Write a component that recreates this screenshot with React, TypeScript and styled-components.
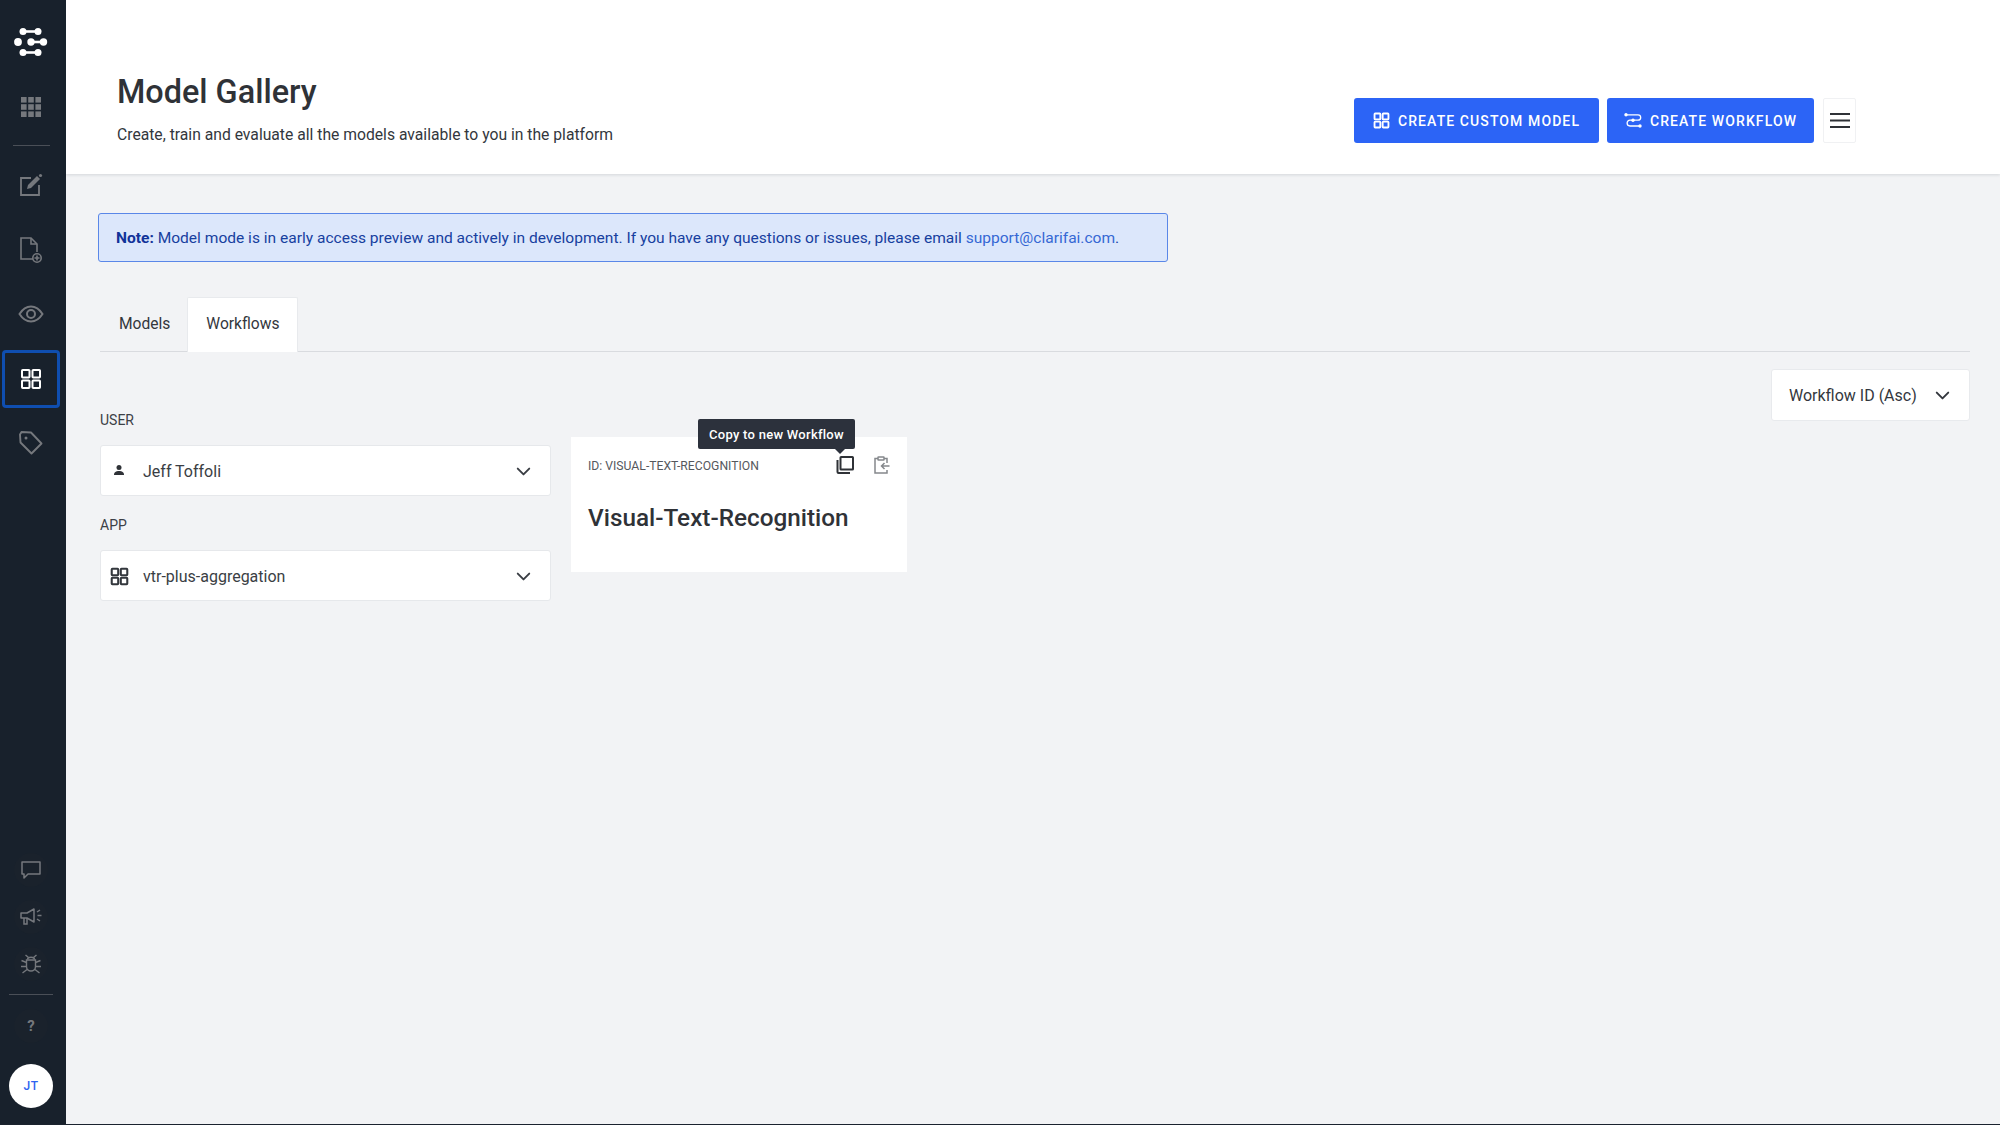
import React from "react";
import styled, { createGlobalStyle } from "styled-components";
import { ChevronDown } from "lucide-react";

const Global = createGlobalStyle`
  html, body { margin: 0; padding: 0; height: 100%; }
  body { font-family: Roboto, "Liberation Sans", sans-serif; background: #f2f3f5; color: #2b2f36; }
  * { box-sizing: border-box; }
`;

const Page = styled.div`
  display: flex;
  width: 2000px;
  height: 1125px;
  overflow: hidden;
  border-bottom: 1px solid #1b232e;
`;

const Sidebar = styled.nav`
  width: 66px;
  flex: none;
  background: #18212c;
  display: flex;
  flex-direction: column;
  align-items: center;
  padding: 13px 4px 0 0;
`;

const NavItem = styled.div<{ $active?: boolean }>`
  width: 58px;
  height: 58px;
  flex: none;
  margin-bottom: 6.5px;
  display: flex;
  align-items: center;
  justify-content: center;
  color: ${(p) => (p.$active ? "#ffffff" : "#75787d")};
  border-radius: 4px;
  border: ${(p) => (p.$active ? "3px solid #0f4eb0" : "none")};
`;

const TopDivider = styled.div`
  width: 37px;
  height: 1px;
  background: #4a4f57;
  margin: 3px 0 10px;
`;

const Spacer = styled.div`
  flex: 1;
`;

const FootItem = styled.div`
  width: 34px;
  height: 34px;
  margin-bottom: 13px;
  border-radius: 50%;
  background: #1a222c;
  display: flex;
  align-items: center;
  justify-content: center;
  color: #75787d;
`;

const FootDivider = styled.div`
  width: 44px;
  height: 1px;
  background: #4a4f57;
  margin: 0 0 14px;
`;

const Help = styled(FootItem)`
  font-size: 15px;
  font-weight: 700;
  margin-bottom: 21px;
`;

const Avatar = styled.div`
  width: 44px;
  height: 44px;
  border-radius: 50%;
  background: #fff;
  color: #2d63f0;
  font-size: 12px;
  font-weight: 500;
  letter-spacing: 0.5px;
  display: flex;
  align-items: center;
  justify-content: center;
  margin-bottom: 16px;
`;

const Main = styled.main`
  flex: 1;
  min-width: 0;
  display: flex;
  flex-direction: column;
`;

const Header = styled.header`
  height: 174px;
  flex: none;
  background: #fff;
  box-shadow: 0 1px 3px rgba(30, 40, 55, 0.14);
  display: flex;
  align-items: flex-start;
  justify-content: space-between;
  padding: 74px 144px 0 51px;
`;

const Title = styled.h1`
  margin: 0;
  font-size: 32.4px;
  line-height: 36px;
  font-weight: 500;
  color: #2f3237;
`;

const Subtitle = styled.p`
  margin: 15px 0 0;
  font-size: 15.7px;
  line-height: 20px;
  color: #33373d;
`;

const Actions = styled.div`
  display: flex;
  gap: 8px;
  margin-top: 24px;
`;

const PrimaryButton = styled.button<{ $w: number }>`
  width: ${(p) => p.$w}px;
  height: 45px;
  border: 0;
  border-radius: 3px;
  background: #2c64f6;
  color: #fff;
  font-family: inherit;
  font-size: 14px;
  font-weight: 500;
  letter-spacing: 1.1px;
  display: flex;
  align-items: center;
  justify-content: center;
  gap: 8px;
  padding: 0;
`;

const MenuButton = styled.button`
  width: 33px;
  height: 45px;
  border: 1px solid #f0f1f3;
  background: #fff;
  border-radius: 2px;
  padding: 0;
  margin-left: 1px;
  display: flex;
  align-items: center;
  justify-content: center;
`;

const Content = styled.div`
  flex: 1;
  padding: 39px 32px 0 32px;
`;

const Notice = styled.div`
  width: 1070px;
  height: 49px;
  background: #dce7fb;
  border: 1px solid #5a87e8;
  border-radius: 3px;
  color: #17409f;
  font-size: 15.56px;
  display: flex;
  align-items: center;
  padding-left: 17px;
  white-space: pre;
  strong { font-weight: 700; color: #113399; }
  a { color: #3568d4; text-decoration: none; }
`;

const Tabs = styled.div`
  margin: 35px 0 0 2px;
  width: 1870px;
  height: 55px;
  border-bottom: 1px solid #d9dbdf;
  display: flex;
  align-items: stretch;
`;

const Tab = styled.div<{ $active?: boolean }>`
  padding: 0 ${(p) => (p.$active ? 18 : 16)}px 2px 18px;
  width: ${(p) => (p.$active ? "111px" : "auto")};
  margin-bottom: -1px;
  display: flex;
  align-items: center;
  justify-content: center;
  font-size: 15.6px;
  color: #33373d;
  background: ${(p) => (p.$active ? "#fff" : "transparent")};
  border: ${(p) => (p.$active ? "1px solid #e8eaed" : "1px solid transparent")};
  border-bottom: 0;
  border-radius: 2px 2px 0 0;
`;

const SortRow = styled.div`
  display: flex;
  justify-content: flex-end;
  width: 1870px;
  margin: 17px 0 0 2px;
`;

const Sort = styled.div`
  width: 199px;
  height: 52px;
  background: #fff;
  border: 1px solid #e8eaed;
  border-radius: 3px;
  display: flex;
  align-items: center;
  justify-content: space-between;
  padding: 0 15px 0 17px;
  font-size: 16px;
  color: #33373d;
`;

const Columns = styled.div`
  display: flex;
  gap: 20px;
  margin: -9px 0 0 2px;
`;

const Filters = styled.div`
  width: 451px;
  flex: none;
`;

const Label = styled.div`
  font-size: 14px;
  line-height: 16px;
  color: #3c4046;
  margin-bottom: 17px;
`;

const Select = styled.div`
  height: 51px;
  background: #fff;
  border: 1px solid #e6e8eb;
  border-radius: 3px;
  display: flex;
  align-items: center;
  padding: 1px 15px 0 0;
  margin-bottom: 21px;
  font-size: 16px;
  color: #3a3e44;
`;

const SelectIcon = styled.span`
  width: 36px;
  flex: none;
  display: flex;
  justify-content: center;
  margin-right: 6px;
  color: #33373d;
`;

const SelectText = styled.span`
  flex: 1;
`;

const Card = styled.article`
  position: relative;
  width: 336px;
  height: 135px;
  margin-top: 25px;
  background: #fff;
  padding: 17px 17px;
`;

const CardTop = styled.div`
  display: flex;
  align-items: center;
  height: 24px;
`;

const CardId = styled.span`
  flex: 1;
  font-size: 12.2px;
  color: #55585d;
`;

const CardIcons = styled.div`
  display: flex;
  gap: 20px;
  margin: -3px 0 0;
`;

const CardTitle = styled.h2`
  margin: 25px 0 0;
  font-size: 24.3px;
  line-height: 30px;
  font-weight: 500;
  color: #2f3237;
`;

const Tooltip = styled.div`
  position: absolute;
  left: 127px;
  top: -18px;
  width: 157px;
  height: 30px;
  background: #2c313c;
  color: #fff;
  border-radius: 2px;
  font-size: 13px;
  font-weight: 500;
  letter-spacing: 0.27px;
  display: flex;
  align-items: center;
  justify-content: center;
  &::after {
    content: "";
    position: absolute;
    left: 137px;
    bottom: -5px;
    border-left: 5px solid transparent;
    border-right: 5px solid transparent;
    border-top: 5px solid #2c313c;
  }
`;

const Squares = ({ size = 22, w = 2 }: { size?: number; w?: number }) => (
  <svg width={size} height={size} viewBox="0 0 22 22" fill="none" stroke="currentColor" strokeWidth={w}>
    <rect x="2" y="2" width="7.5" height="7.5" rx="0.8" />
    <rect x="12.5" y="2" width="7.5" height="7.5" rx="0.8" />
    <rect x="2" y="12.5" width="7.5" height="7.5" rx="0.8" />
    <rect x="12.5" y="12.5" width="7.5" height="7.5" rx="0.8" />
  </svg>
);

const Logo = () => (
  <svg width="34" height="28" viewBox="0 0 34 28" fill="#fff" stroke="#fff">
    <circle cx="4" cy="14" r="3.9" stroke="none" />
    <g strokeWidth="2.6">
      <path d="M9 3.500h16" />
      <path d="M16 14h13" />
      <path d="M9 24.500h16" />
    </g>
    <circle cx="9" cy="3.500" r="3.500" stroke="none" />
    <circle cx="24" cy="3.500" r="3.500" stroke="none" />
    <circle cx="17" cy="14" r="3.700" stroke="none" />
    <circle cx="29.500" cy="14" r="3.700" stroke="none" />
    <circle cx="9" cy="24.500" r="3.500" stroke="none" />
    <circle cx="24" cy="24.500" r="3.500" stroke="none" />
  </svg>
);

const AppsGrid = () => (
  <svg width="20" height="20" viewBox="0 0 20 20" fill="currentColor">
    {[0, 7.2, 14.4].flatMap((y) =>
      [0, 7.2, 14.4].map((x) => <rect key={`${x}-${y}`} x={x} y={y} width="5.6" height="5.6" />)
    )}
  </svg>
);

const EditIcon = () => (
  <svg width="24" height="24" viewBox="0 0 24 24" fill="none" stroke="currentColor" strokeWidth="1.8">
    <path d="M12 5H2v17h18V12" />
    <path d="M8 16l1-4 9-9 3 3-9 9z" fill="currentColor" stroke="none" />
    <circle cx="21.5" cy="2.5" r="1.6" fill="currentColor" stroke="none" />
  </svg>
);

const FileIcon = () => (
  <svg width="26" height="28" viewBox="0 0 26 28" fill="none" stroke="currentColor" strokeWidth="1.6">
    <path d="M15 23H3V2h10l6 6v8" />
    <path d="M13 2v6h6" />
    <circle cx="19" cy="22" r="4.2" />
    <path d="M19 19.5v5M16.5 22h5" />
  </svg>
);

const EyeIcon = () => (
  <svg width="26" height="18" viewBox="0 0 26 18" fill="none" stroke="currentColor" strokeWidth="2">
    <path d="M1.5 9C5 3.5 9 1.5 13 1.5S21 3.5 24.5 9C21 14.5 17 16.5 13 16.5S5 14.5 1.5 9z" />
    <circle cx="13" cy="9" r="4" />
  </svg>
);

const TagIcon = () => (
  <svg width="26" height="26" viewBox="0 0 26 26" fill="none" stroke="currentColor" strokeWidth="1.9">
    <path d="M2 4.5L3.5 2 13 2.5 23.5 13.5 13.5 23.5 2.5 12.5z" strokeLinejoin="round" />
    <circle cx="8" cy="8" r="1.5" fill="currentColor" stroke="none" />
  </svg>
);

const ChatIcon = () => (
  <svg width="20" height="18" viewBox="0 0 20 18" fill="none" stroke="currentColor" strokeWidth="1.5">
    <path d="M1 1h18v12H7l-4 4v-4H1z" strokeLinejoin="round" />
  </svg>
);

const MegaIcon = () => (
  <svg width="22" height="20" viewBox="0 0 22 20" fill="none" stroke="currentColor" strokeWidth="1.5">
    <path d="M1 6h6l7-4v13l-7-4H1z" strokeLinejoin="round" />
    <path d="M4 11v6h3v-6M17 5l3-2M17.5 8.500h4M17 12l3 2" />
  </svg>
);

const BugIcon = () => (
  <svg width="20" height="20" viewBox="0 0 20 20" fill="none" stroke="currentColor" strokeWidth="1.4">
    <path d="M6.500 5.500c0-3 7-3 7 0" />
    <path d="M5.500 6h9v6.500c0 6-9 6-9 0z" />
    <path d="M4.500 1l3 2.500M15.500 1l-3 2.500M0.500 6.500l5 2M19.500 6.500l-5 2M0 12.500h5.500M20 12.500h-5.500M1.500 19l4.500-3.500M18.500 19l-4.500-3.500" />
  </svg>
);

const FlowIcon = () => (
  <svg width="18" height="15" viewBox="0 0 18 15" fill="none" stroke="currentColor" strokeWidth="1.3">
    <path d="M2 1.800h12a2.700 2.700 0 0 1 0 5.400H6a2.900 2.900 0 0 0 0 5.800h10" />
    <circle cx="2" cy="1.800" r="1.700" fill="currentColor" stroke="none" />
    <circle cx="9" cy="7.200" r="1.700" fill="currentColor" stroke="none" />
    <circle cx="16" cy="13" r="1.700" fill="currentColor" stroke="none" />
  </svg>
);

const Hamburger = () => (
  <svg width="20" height="15" viewBox="0 0 20 15" stroke="#2f3237" strokeWidth="2">
    <path d="M0 1h20M0 7.500h20M0 14h20" />
  </svg>
);

const PersonIcon = () => (
  <svg width="10" height="10" viewBox="0 0 10 10" fill="#2f3237" style={{ marginTop: -3 }}>
    <circle cx="5" cy="2.600" r="2.500" />
    <path d="M0 10c0-3 2-4 5-4s5 1 5 4z" />
  </svg>
);

const CopyIcon = () => (
  <svg width="18" height="18" viewBox="0 0 18 18" fill="none" stroke="#2f3237" strokeWidth="2">
    <rect x="4.500" y="1" width="12.500" height="12.500" rx="0.600" />
    <path d="M1.500 4v12a1 1 0 0 0 1 1h11.500" />
  </svg>
);

const ClipIcon = () => (
  <svg width="16" height="18" viewBox="0 0 16 18" fill="none" stroke="#85888c" strokeWidth="1.500">
    <path d="M4 2.500H1v14.500h12v-3M13 7V2.500h-3" />
    <rect x="4" y="1" width="6" height="3" rx="0.500" />
    <path d="M15.500 10H7.500M10.500 7l-3 3 3 3" />
  </svg>
);

export default function App() {
  return (
    <>
      <Global />
      <Page>
        <Sidebar>
          <NavItem><Logo /></NavItem>
          <NavItem><AppsGrid /></NavItem>
          <TopDivider />
          <NavItem><EditIcon /></NavItem>
          <NavItem><FileIcon /></NavItem>
          <NavItem><EyeIcon /></NavItem>
          <NavItem $active><Squares /></NavItem>
          <NavItem><TagIcon /></NavItem>
          <Spacer />
          <FootItem><ChatIcon /></FootItem>
          <FootItem><MegaIcon /></FootItem>
          <FootItem><BugIcon /></FootItem>
          <FootDivider />
          <Help>?</Help>
          <Avatar>JT</Avatar>
        </Sidebar>
        <Main>
          <Header>
            <div>
              <Title>Model Gallery</Title>
              <Subtitle>Create, train and evaluate all the models available to you in the platform</Subtitle>
            </div>
            <Actions>
              <PrimaryButton $w={245}><Squares size={17} w={2.4} />CREATE CUSTOM MODEL</PrimaryButton>
              <PrimaryButton $w={207}><FlowIcon />CREATE WORKFLOW</PrimaryButton>
              <MenuButton><Hamburger /></MenuButton>
            </Actions>
          </Header>
          <Content>
            <Notice>
              <strong>Note:</strong> Model mode is in early access preview and actively in development. If you have any questions or issues, please email <a>support@clarifai.com</a>.
            </Notice>
            <Tabs>
              <Tab>Models</Tab>
              <Tab $active>Workflows</Tab>
            </Tabs>
            <SortRow>
              <Sort>Workflow ID (Asc)<ChevronDown size={23} strokeWidth={2} /></Sort>
            </SortRow>
            <Columns>
              <Filters>
                <Label>USER</Label>
                <Select>
                  <SelectIcon><PersonIcon /></SelectIcon>
                  <SelectText>Jeff Toffoli</SelectText>
                  <ChevronDown size={23} strokeWidth={2} />
                </Select>
                <Label>APP</Label>
                <Select>
                  <SelectIcon><Squares size={19} w={2.4} /></SelectIcon>
                  <SelectText>vtr-plus-aggregation</SelectText>
                  <ChevronDown size={23} strokeWidth={2} />
                </Select>
              </Filters>
              <Card>
                <Tooltip>Copy to new Workflow</Tooltip>
                <CardTop>
                  <CardId>ID: VISUAL-TEXT-RECOGNITION</CardId>
                  <CardIcons><CopyIcon /><ClipIcon /></CardIcons>
                </CardTop>
                <CardTitle>Visual-Text-Recognition</CardTitle>
              </Card>
            </Columns>
          </Content>
        </Main>
      </Page>
    </>
  );
}
